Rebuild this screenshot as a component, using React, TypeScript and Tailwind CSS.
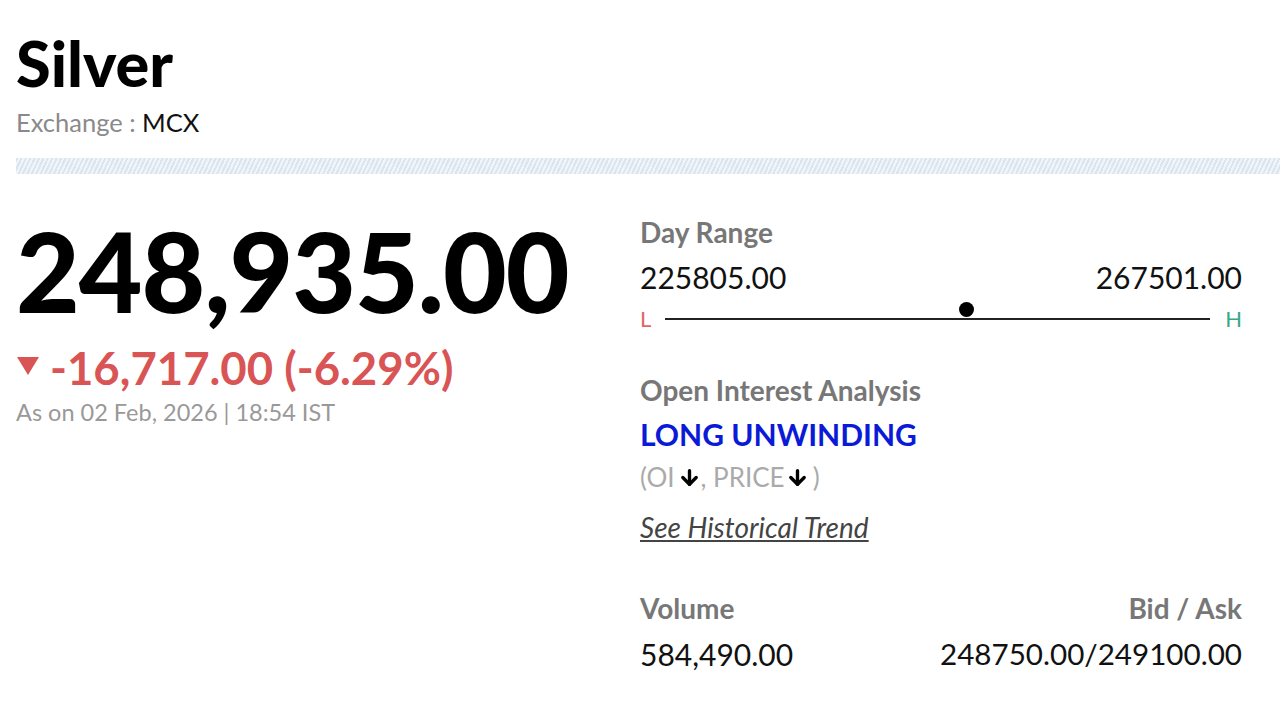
import { ArrowDown } from "lucide-react";

function DayRange() {
    return (
        <div>
            <div className="text-[28px] font-bold text-[#777] leading-[32px]">Day Range</div>
            <div className="flex justify-between text-[30px] text-[#111] leading-[36px] mt-[11px]">
                <span>225805.00</span>
                <span>267501.00</span>
            </div>
            <div className="flex items-center gap-[12px] mt-[12px] h-[24px]">
                <span className="text-[22px] text-[#e06666] w-[13px] leading-[24px]">L</span>
                <div className="relative flex-1 h-[2px] bg-[#222]">
                    {/* marker */}
                    <div className="absolute left-[calc(55.4%-8px)] top-[-16px] w-[15px] h-[15px] rounded-full bg-black" />
                </div>
                <span className="text-[22px] text-[#3aa786] w-[20px] leading-[24px] text-right">H</span>
            </div>
        </div>
    );
}

export default function App() {
    return (
        <div className="bg-white w-[1280px] h-[720px] overflow-hidden pl-[16px] pt-[27px] font-['Lato',sans-serif]">
            <h1 className="text-[63px] font-black text-black leading-[72px]">Silver</h1>
            <div className="text-[25.5px] leading-[32px] mt-[7px]">
                <span className="text-[#8a8a8a]">Exchange : </span>
                <span className="text-[#111]">MCX</span>
            </div>
            <div className="h-[16px] mt-[20px] bg-[repeating-linear-gradient(115deg,#d9e5ef_0px,#d9e5ef_2px,#f1f5f9_2px,#f1f5f9_4px)]" />

            <div className="flex mt-[36px]">
                {/* Prix */}
                <div className="w-[624px]">
                    <div className="text-[110px] font-black text-black leading-[120px] tracking-[-1px]">248,935.00</div>
                    <div className="flex items-center text-[45.5px] font-bold text-[#d95555] leading-[52px] mt-[12px]">
                        <svg width="24" height="20" viewBox="0 0 24 20" className="mr-[10px] mt-[-4px]">
                            <polygon points="1,1 23,1 12,19" fill="#d95555" />
                        </svg>
                        <span>-16,717.00 (-6.29%)</span>
                    </div>
                    <div className="text-[23.5px] text-[#999] leading-[30px] mt-[3px]">As on 02 Feb, 2026 | 18:54 IST</div>
                </div>

                {/* Details */}
                <div className="w-[602px] mt-[6px]">
                    <DayRange />

                    <div className="text-[28px] font-bold text-[#777] leading-[32px] mt-[43px]">Open Interest Analysis</div>
                    <div className="text-[30px] font-bold text-[#0a1ad6] leading-[36px] mt-[10px]">LONG UNWINDING</div>
                    <div className="flex items-center text-[26px] text-[#aaa] leading-[32px] mt-[9px]">
                        <span>(OI</span>
                        <ArrowDown size={23} strokeWidth={3.5} color="#000" className="ml-[3px]" />
                        <span>, PRICE</span>
                        <ArrowDown size={23} strokeWidth={3.5} color="#000" className="ml-[1px] mr-[4px]" />
                        <span>)</span>
                    </div>
                    <a href="#" className="block w-fit text-[28px] italic text-[#444] underline leading-[32px] mt-[18px]">See Historical Trend</a>

                    <div className="flex justify-between text-[28px] font-bold text-[#777] leading-[32px] mt-[49px]">
                        <span>Volume</span>
                        <span>Bid / Ask</span>
                    </div>
                    <div className="flex justify-between text-[30px] text-[#111] leading-[36px] mt-[12px]">
                        <span>584,490.00</span>
                        <span className="text-[29.6px]">248750.00/249100.00</span>
                    </div>
                </div>
            </div>
        </div>
    );
}
